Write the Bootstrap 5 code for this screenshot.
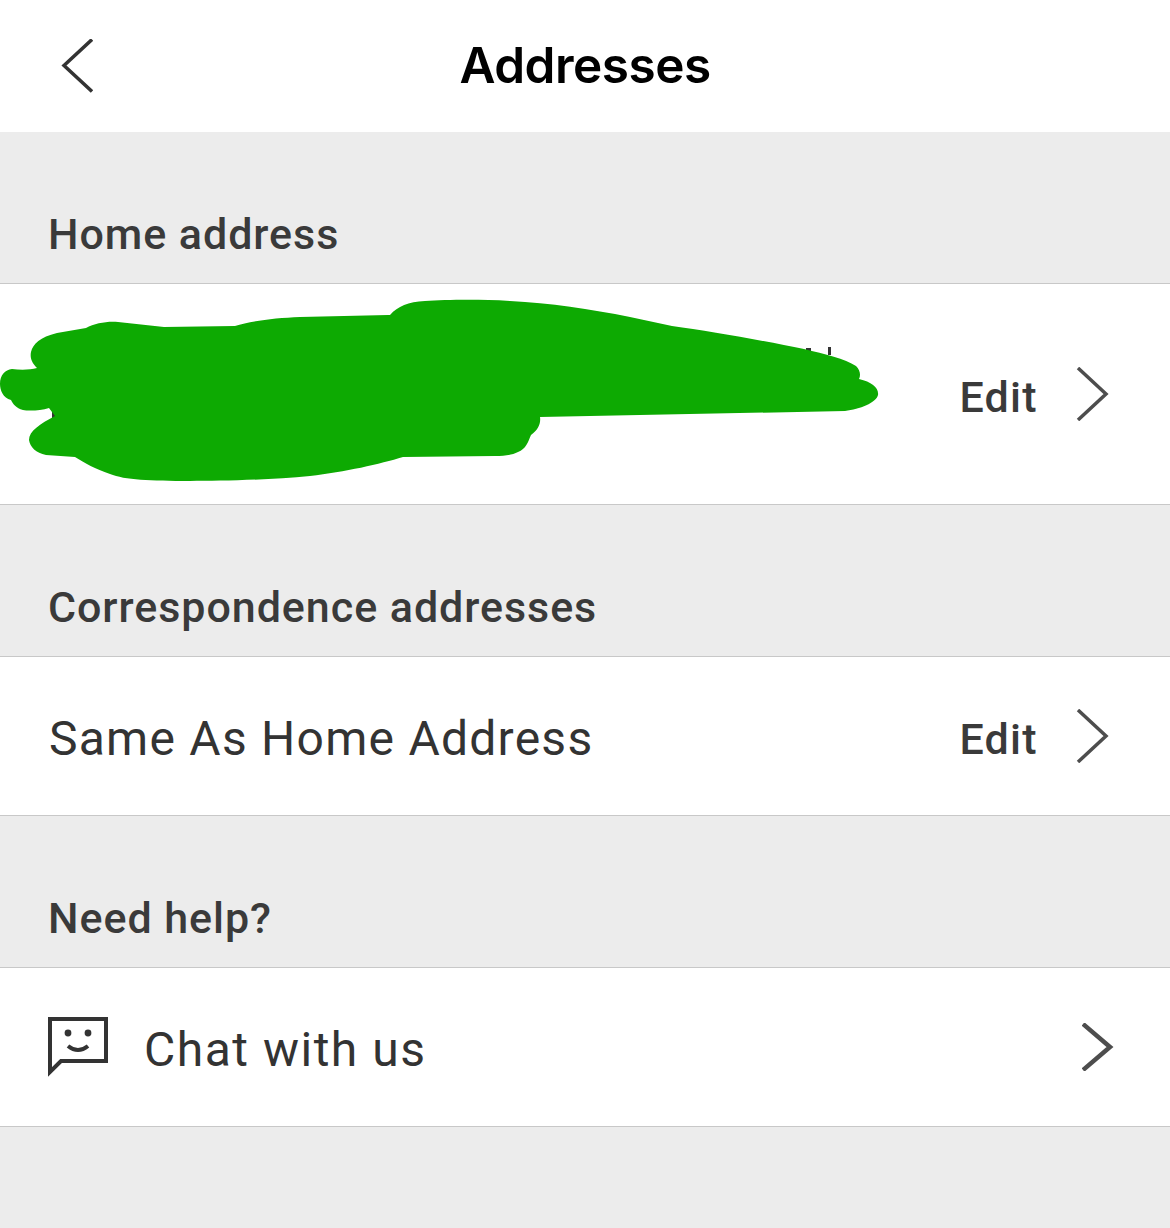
<!DOCTYPE html>
<html lang="en">

<head>
    <meta charset="UTF-8">
    <meta name="viewport" content="width=device-width, initial-scale=1.0">
    <title>Addresses</title>
    <link href="https://cdn.jsdelivr.net/npm/bootstrap@5.3.0/dist/css/bootstrap.min.css" rel="stylesheet">
    <style>
        body {
            font-family: Roboto, "Liberation Sans", sans-serif;
            background-color: #ececec;
            color: #333333;
            min-height: 1228px;
        }

        .top-bar {
            height: 132px;
            padding: 0 56px;
            background: #ffffff;
        }

        .top-title {
            flex-grow: 1;
            margin: 0;
            padding: 0 37px 0 0;
            text-align: center;
            font-family: Inter, sans-serif;
            font-size: 49.5px;
            font-weight: 600;
            letter-spacing: -0.5px;
            color: #000000;
        }

        .group-label {
            height: 152px;
            margin: 0;
            padding: 0 48px 25px;
            font-size: 43px;
            font-weight: 500;
            line-height: 48px;
            letter-spacing: 0.95px;
            color: #3a3a3a;
            border-bottom: 1px solid #c8c8c8;
        }

        .addr-row {
            height: 159px;
            padding: 0 61px 0 49px;
            background: #ffffff;
            border-bottom: 1px solid #c8c8c8;
        }

        .addr-row.tall {
            height: 221px;
        }

        .row-text {
            padding-top: 6px;
            font-size: 48px;
            font-weight: 400;
            letter-spacing: 1.25px;
        }

        .edit-link {
            margin-right: 37px;
            padding-top: 6px;
            font-size: 43px;
            font-weight: 500;
            letter-spacing: 1.3px;
            color: #3a3a3a;
        }

        .scribble {
            position: absolute;
            top: 0;
            left: 0;
        }

        .chat-mark {
            margin: 0 36px 0 -1px;
        }

        .chat-label {
            letter-spacing: 1.5px;
        }

        .chat-arrow {
            margin-right: -7px;
        }
    </style>
</head>

<body>

    <!-- Header -->
    <div class="top-bar d-flex align-items-center">
        <svg width="37" height="55" viewBox="0 0 37 55" fill="none" stroke="#333333" stroke-width="3.5">
            <path d="M36 0.5 L8 26.5 L36 52.5" />
        </svg>
        <h1 class="top-title">Addresses</h1>
    </div>

    <!-- Home address -->
    <h2 class="group-label d-flex align-items-end">Home address</h2>
    <div class="addr-row tall d-flex align-items-center justify-content-end position-relative">
        <svg class="scribble" width="900" height="220" viewBox="0 284 900 220">
            <path d="M806 348h5v5h-5zM828 347h3v8h-3zM52 410h3v8h-3z" fill="#333333" />
            <path fill="#0daa02" d="M390 315C398 306 408 302 425 301C445 300 475 299 510 301C550 303 590 309 630 317L672 326C710 331 765 341 804 349C825 354 845 359 856 366C860 370 861 375 859 379C872 382 879 388 878 395C876 403 860 409 845 411L540 417C541 424 538 430 531 435C528 442 526 449 518 452C512 455 505 456 495 456L403 457C380 464 345 472 310 476C270 480 220 481 190 481C150 481 125 480 110 474C95 469 85 463 75 457L46 455C36 453 30 447 29 440C29 431 40 424 55 416L49 408C40 411 28 411 23 410C16 408 13 404 11 400C3 398 0 390 0 384C0 375 5 370 12 369C20 370 30 370 37 368C31 362 30 357 31 352C33 344 40 337 57 333L86 328C95 323 108 321 118 322L164 327L235 326C250 321 275 318 300 317L388 315Z" />
        </svg>
        <span class="edit-link">Edit</span>
        <svg width="34" height="54" viewBox="0 0 34 54" fill="none" stroke="#4d4d4d" stroke-width="3.5">
            <path d="M3 1 L31 27 L3 53" />
        </svg>
    </div>

    <!-- Correspondence addresses -->
    <h2 class="group-label d-flex align-items-end">Correspondence addresses</h2>
    <div class="addr-row d-flex align-items-center justify-content-between">
        <span class="row-text">Same As Home Address</span>
        <div class="d-flex align-items-center">
            <span class="edit-link">Edit</span>
            <svg width="34" height="54" viewBox="0 0 34 54" fill="none" stroke="#4d4d4d" stroke-width="3.5">
                <path d="M3 1 L31 27 L3 53" />
            </svg>
        </div>
    </div>

    <!-- Need help -->
    <h2 class="group-label d-flex align-items-end">Need help?</h2>
    <div class="addr-row d-flex align-items-center justify-content-between">
        <div class="d-flex align-items-center">
            <svg class="chat-mark" width="60" height="60" viewBox="0 0 60 60" fill="none" stroke="#333333" stroke-width="4">
                <path d="M58 2 H2 V55 L13 44 H58 Z" />
                <path d="M20 29 Q30 37 40 29" />
                <circle cx="20" cy="16" r="3.4" fill="#333333" stroke="none" />
                <circle cx="40" cy="16" r="3.4" fill="#333333" stroke="none" />
            </svg>
            <span class="row-text chat-label">Chat with us</span>
        </div>
        <svg class="chat-arrow" width="34" height="48" viewBox="0 0 34 48" fill="none" stroke="#4d4d4d" stroke-width="4.5">
            <path d="M1 1 L28 24 L1 47" />
        </svg>
    </div>

    <script src="https://cdn.jsdelivr.net/npm/bootstrap@5.3.0/dist/js/bootstrap.bundle.min.js"></script>
</body>

</html>
